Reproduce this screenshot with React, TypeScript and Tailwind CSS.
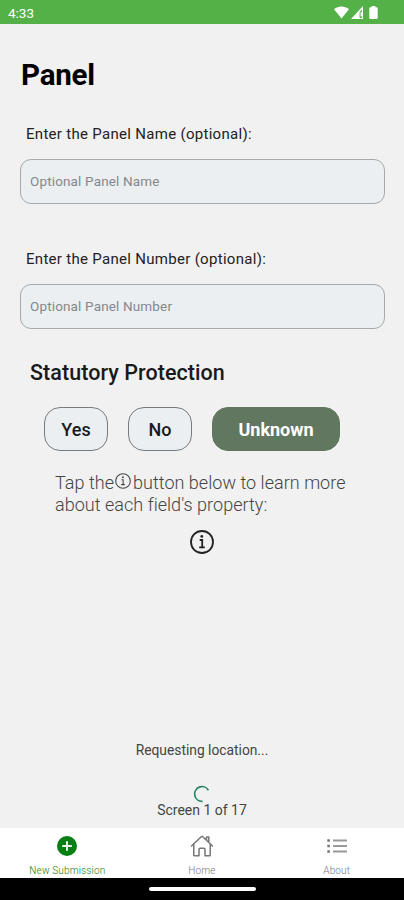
import { useState } from 'react';
import clsx from 'clsx';
import { IoHomeOutline } from 'react-icons/io5';

const OPTIONS = [
  { label: 'Yes', width: 'w-16' },
  { label: 'No', width: 'w-16' },
  { label: 'Unknown', width: 'w-32' },
];

function AddIcon({ size }: { size: number }) {
  return (
    <svg width={size} height={size} viewBox="0 0 24 24">
      <circle cx="12" cy="12" r="10" fill="currentColor" />
      <path d="M12 7.2v9.6M7.2 12h9.6" stroke="#eef6ee" strokeWidth="2" />
    </svg>
  );
}

function ListIcon({ size }: { size: number }) {
  return (
    <svg width={size} height={size} viewBox="0 0 24 24" stroke="currentColor">
      <path d="M8 6.5h14M8 12h14M8 17.5h14" strokeWidth="1.8" opacity="0.75" />
      <path d="M2.3 6.5h2.6M2.3 12h2.6M2.3 17.5h2.6" strokeWidth="2.4" />
    </svg>
  );
}

const TABS = [
  { label: 'New Submission', Icon: AddIcon },
  { label: 'Home', Icon: IoHomeOutline },
  { label: 'About', Icon: ListIcon },
];

function StatusBar() {
  return (
    <header className="flex h-[23.5px] shrink-0 items-center justify-between bg-[#54b148] pl-2 pr-[26px] text-white">
      <span className="pt-[3px] text-[13.5px] leading-5">4:33</span>
      <div className="flex items-center pt-px">
        <svg width="15" height="13" viewBox="0 0 15 13" fill="currentColor">
          <path d="M0 3.2C4.2-.3 10.8-.3 15 3.2L7.5 12.5Z" />
        </svg>
        <svg className="ml-0.5" width="12" height="13" viewBox="0 0 12 13" fill="currentColor">
          <path fillRule="evenodd" d="M12 0v13H0ZM11 3.5 8.6 6V12H11Z" />
          <path d="M9.6 6H11v4.6H9.6z" />
        </svg>
        <svg className="ml-1.5" width="9" height="13" viewBox="0 0 9 13" fill="currentColor">
          <path d="M2.6 0h3.8v1.2h1A1.3 1.3 0 0 1 8.7 2.5v9.2A1.3 1.3 0 0 1 7.4 13H1.6A1.3 1.3 0 0 1 .3 11.7V2.5a1.3 1.3 0 0 1 1.3-1.3h1Z" />
        </svg>
      </div>
    </header>
  );
}

function InfoIcon({ size, stroke }: { size: number; stroke: number }) {
  return (
    <svg
      width={size}
      height={size}
      viewBox="0 0 24 24"
      fill="none"
      stroke="currentColor"
      strokeWidth={stroke}
      className="shrink-0"
    >
      <circle cx="12" cy="12" r="11" />
      <path d="M9.7 10h2.5v7.2M9.2 17.4h5.6" />
      <circle cx="11.8" cy="6.4" r="1.4" fill="currentColor" stroke="none" />
    </svg>
  );
}

function Field({ label, placeholder }: { label: string; placeholder: string }) {
  return (
    <label className="block h-[125px]">
      <span className="ml-[26px] block text-[15px] leading-5 tracking-[0.3px] text-[#222]">
        {label}
      </span>
      <input
        placeholder={placeholder}
        className="mx-5 mt-[15px] block h-[45px] w-[365px] rounded-[11px] border border-[#a5aaad] bg-[#ebeff2] px-[9px] text-[13.5px] tracking-[0.15px] text-[#333] outline-none placeholder:text-[#84888b]"
      />
    </label>
  );
}

function Protection() {
  const [selected, setSelected] = useState('Unknown');

  return (
    <section>
      <h2 className="ml-[30px] text-[21.5px] font-medium leading-6 tracking-[0.06px] text-[#1a1a1a]">
        Statutory Protection
      </h2>
      <div className="ml-11 mt-[22px] flex gap-5">
        {OPTIONS.map(({ label, width }) => (
          <button
            key={label}
            onClick={() => setSelected(label)}
            className={clsx(
              'h-11 rounded-2xl border pt-0.5 text-lg',
              width,
              selected === label
                ? 'border-[#62775f] bg-[#62775f] font-bold text-white'
                : 'border-[#777b7c] bg-[#ebeff2] font-medium text-[#1a1a1a]',
            )}
          >
            {label}
          </button>
        ))}
      </div>
    </section>
  );
}

function TabBar() {
  return (
    <nav className="flex h-[50px] shrink-0 bg-white">
      {TABS.map(({ label, Icon }, i) => (
        <button
          key={label}
          className={clsx(
            'flex flex-1 flex-col items-center pt-[6px]',
            i === 0 ? 'text-[#087f12]' : 'text-[#777]',
          )}
        >
          <Icon size={24} />
          <span className="mt-[7px] text-[10px] font-light leading-3 tracking-[0.15px]">
            {label}
          </span>
        </button>
      ))}
    </nav>
  );
}

export default function App() {
  return (
    <div className="flex h-[900px] w-[404px] flex-col overflow-hidden bg-[#f1f1f1] font-['Roboto',sans-serif]">
      <StatusBar />
      <main className="flex flex-1 flex-col">
        <h1 className="ml-[21px] mt-[33px] text-[29.5px] font-bold leading-9 tracking-[-0.2px] text-black">
          Panel
        </h1>
        <div className="mt-[31px]">
          <Field label="Enter the Panel Name (optional):" placeholder="Optional Panel Name" />
          <Field label="Enter the Panel Number (optional):" placeholder="Optional Panel Number" />
        </div>
        <div className="-mt-[13px]">
          <Protection />
        </div>
        <div className="ml-[55px] mt-[21px] text-[18px] font-light leading-[22px] tracking-[0.03px] text-[#444]">
          <p className="flex items-center whitespace-nowrap">
            Tap the
            <span className="mx-[1.5px] -mt-[3px]">
              <InfoIcon size={16} stroke={1.6} />
            </span>
            button below to learn more
          </p>
          <p>about each field's property:</p>
        </div>
        <button className="mx-auto mt-[14px] text-[#222]">
          <InfoIcon size={24} stroke={1.8} />
        </button>
        <div className="mt-auto flex flex-col items-center pb-2 text-[14px] leading-5 text-[#444]">
          <p className="text-[13.8px]">Requesting location...</p>
          <svg className="mt-[25px]" width="18" height="18" viewBox="0 0 18 18" fill="none">
            <path d="M15.4 5.2A7.4 7.4 0 1 0 9.5 16.4" stroke="#218568" strokeWidth="1.7" />
          </svg>
          <p className="-mt-[3px]">Screen 1 of 17</p>
        </div>
      </main>
      <TabBar />
      <div className="flex h-[22.5px] shrink-0 items-center justify-center bg-black">
        <div className="h-1 w-[107px] rounded-full bg-white" />
      </div>
    </div>
  );
}
